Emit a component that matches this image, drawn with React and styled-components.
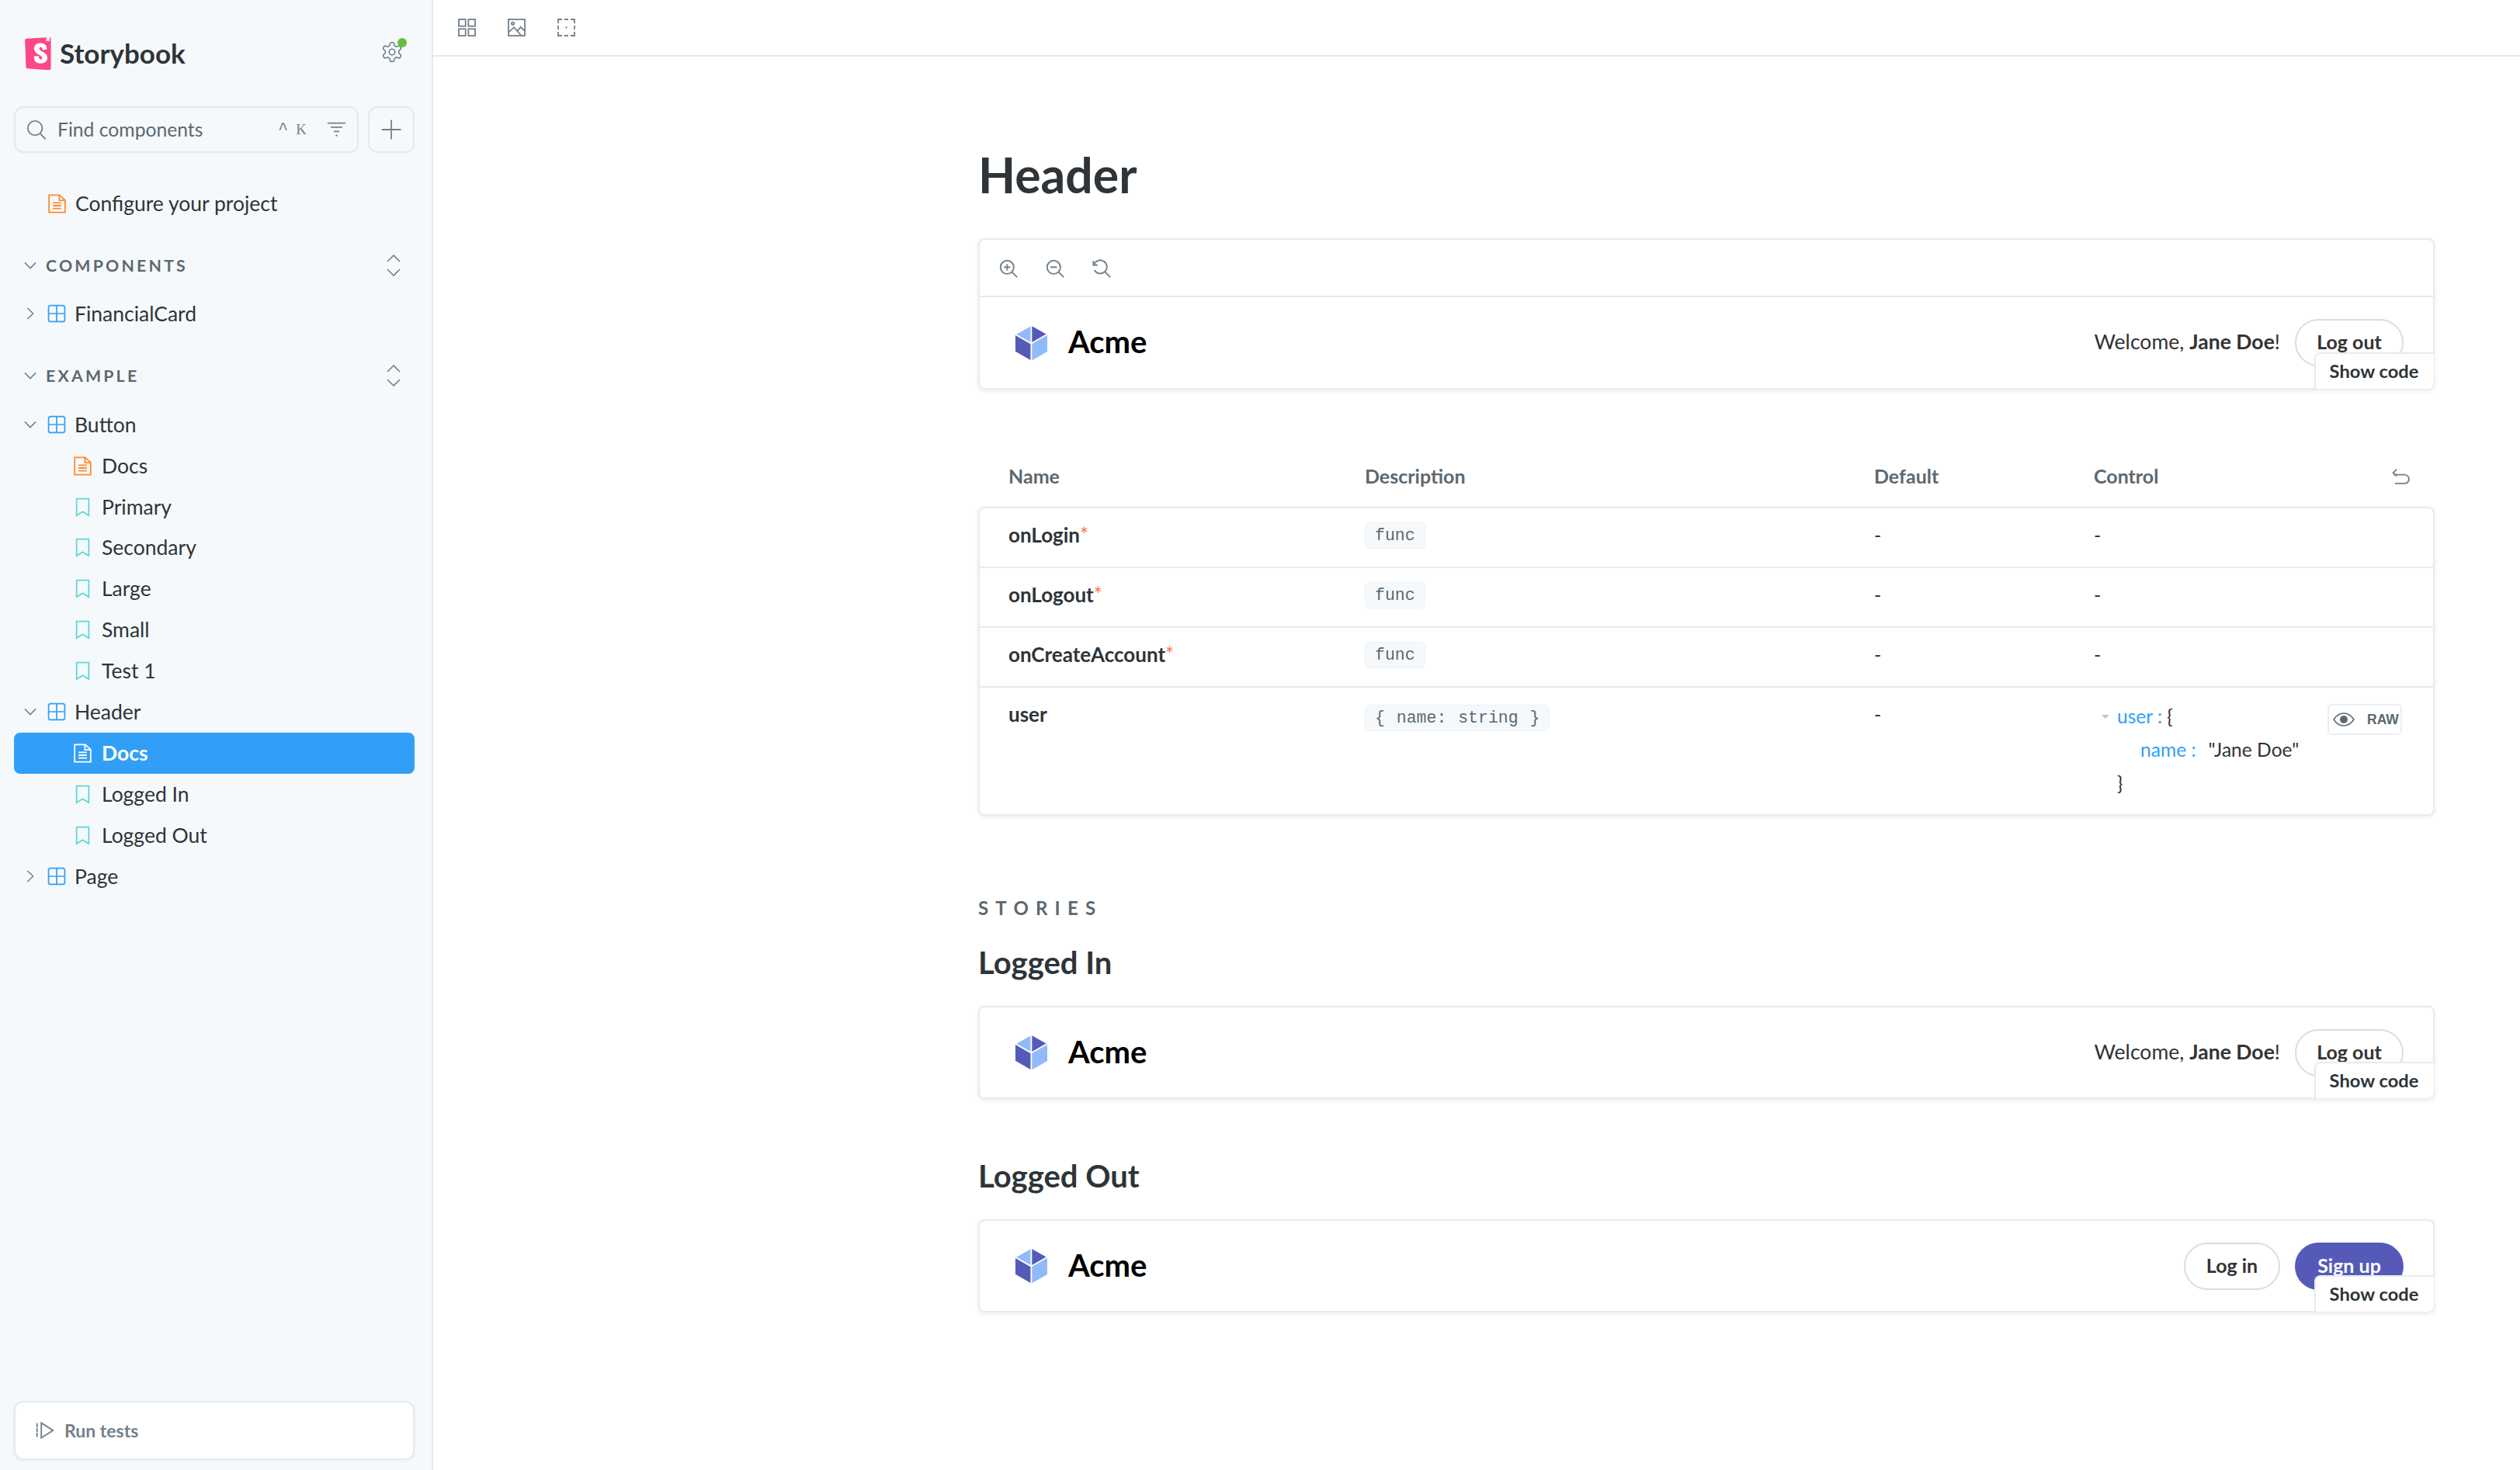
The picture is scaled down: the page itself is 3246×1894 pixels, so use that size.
import React from "react";
import styled, { createGlobalStyle, css } from "styled-components";

const Global = createGlobalStyle`
  html, body { margin: 0; padding: 0; background: #fff; }
  body { font-family: "Lato", "Noto Sans", sans-serif; color: #2e3438; }
  * { box-sizing: border-box; }
`;

const Page = styled.div`
  display: flex;
  width: 3246px;
  height: 1894px;
  overflow: hidden;
`;

/* ---------- sidebar ---------- */
const Sidebar = styled.aside`
  width: 558px;
  flex: none;
  height: 100%;
  background: #f6f9fc;
  border-right: 2px solid #e3e9f0;
  display: flex;
  flex-direction: column;
`;
const Brand = styled.div`
  height: 137px;
  flex: none;
  display: flex;
  align-items: center;
  padding: 0 36px 0 32px;
`;
const BrandName = styled.span`
  font-size: 35px;
  font-weight: 700;
  color: #2e3438;
  margin-left: 11px;
  flex: 1;
  padding-bottom: 2px;
`;
const GearWrap = styled.span`
  position: relative;
  display: flex;
  width: 30px;
  height: 30px;
  margin-top: -4px;
  color: #73818c;
`;
const GreenDot = styled.span`
  position: absolute;
  top: -3px;
  right: -4px;
  width: 12px;
  height: 12px;
  border-radius: 50%;
  background: #66bf3c;
`;
const SearchRow = styled.div`
  display: flex;
  gap: 12px;
  padding: 0 22px 0 18px;
  height: 60px;
  flex: none;
`;
const SearchBox = styled.div`
  flex: 1;
  display: flex;
  align-items: center;
  border: 2px solid #e3e9f0;
  border-radius: 12px;
  padding: 0 14px;
  color: #73818c;
`;
const SearchText = styled.span`
  margin-left: 14px;
  flex: 1;
  font-size: 24.7px;
  color: #5c6870;
  padding-bottom: 2px;
`;
const KeyCaret = styled.span`
  font: 22px "Liberation Mono", monospace;
  color: #73818c;
  margin-right: 26px;
  display: flex;
  gap: 10px;
  align-items: center;
`;
const KeyK = styled.span`
  font: 19px "Liberation Serif", serif;
`;
const Square = styled.div`
  width: 60px;
  flex: none;
  border: 2px solid #e3e9f0;
  border-radius: 12px;
  display: flex;
  align-items: center;
  justify-content: center;
  color: #73818c;
`;
const Row = styled.div`
  height: ${(p) => p.$h || 52.9}px;
  flex: none;
  margin: ${(p) => p.$mt || 0}px 22px 0 18px;
  padding-left: ${(p) => p.$pad}px;
  display: flex;
  align-items: center;
  border-radius: 8px;
  font-size: 26.5px;
  color: #2e3438;
  background: ${(p) => (p.$selected ? "#319ff7" : "transparent")};
  ${(p) =>
    p.$selected &&
    css`
      color: #fff;
      font-weight: 700;
    `}
`;
const RowLabel = styled.span`
  padding-bottom: 1px;
`;
const Caret = styled.span`
  width: 28px;
  margin-left: -1px;
  margin-right: 8px;
  flex: none;
  display: flex;
  justify-content: center;
  color: #73818c;
`;
const RowIcon = styled.span`
  display: flex;
  margin-right: ${(p) => p.$gap || 11}px;
  flex: none;
`;
const SectionHead = styled.div`
  height: 53px;
  flex: none;
  margin: ${(p) => p.$mt}px 22px 0 30px;
  display: flex;
  align-items: center;
  color: #73818c;
`;
const SectionCaret = styled.span`
  width: 24px;
  display: flex;
  margin-right: 5px;
  flex: none;
`;
const SectionName = styled.span`
  flex: 1;
  font-size: 21.3px;
  font-weight: 700;
  letter-spacing: 3.2px;
  color: #5c6870;
`;
const Expand = styled.span`
  display: flex;
  margin-right: 18px;
`;
const Footer = styled.div`
  margin: auto 22px 13px 18px;
  height: 76px;
  background: #fff;
  border: 2px solid #e6ebf1;
  border-radius: 12px;
  box-shadow: 0 1px 4px rgba(0, 0, 0, 0.06);
  display: flex;
  align-items: center;
  padding: 0 0 0 26px;
  gap: 13px;
  color: #73818c;
  font-size: 23px;
  font-weight: 700;
`;

/* ---------- main ---------- */
const Main = styled.main`
  flex: 1;
  min-width: 0;
  display: flex;
  flex-direction: column;
`;
const TopBar = styled.div`
  height: 73px;
  flex: none;
  border-bottom: 2px solid #e3e9f0;
  display: flex;
  align-items: flex-start;
  padding: 24px 0 0 32px;
  gap: 41px;
  color: #73818c;
`;
const Content = styled.div`
  padding: 113px 110px 0 702px;
`;
const Title = styled.h1`
  margin: 0;
  height: 80px;
  line-height: 78px;
  font-size: 62.5px;
  font-weight: 700;
  color: #2e3438;
`;
const Card = styled.div`
  position: relative;
  margin-top: ${(p) => p.$mt}px;
  border: 2px solid #e6ebf1;
  border-radius: 8px;
  background: #fff;
  box-shadow: 0 2px 6px rgba(0, 0, 0, 0.08);
`;
const ZoomBar = styled.div`
  height: 74px;
  border-bottom: 2px solid #e3e9f0;
  display: flex;
  align-items: center;
  padding: 1px 0 0 25px;
  gap: 36px;
  color: #73818c;
`;
const AcmeBar = styled.div`
  height: ${(p) => p.$h}px;
  display: flex;
  align-items: center;
  padding: 0 38px 0 36px;
  justify-content: space-between;
`;
const AcmeLeft = styled.div`
  display: flex;
  align-items: center;
`;
const AcmeName = styled.span`
  margin-left: 18px;
  font-size: 40px;
  font-weight: 700;
  color: #000;
  padding-bottom: 3px;
`;
const AcmeRight = styled.div`
  display: flex;
  align-items: center;
`;
const Welcome = styled.span`
  font-size: 26.6px;
  color: #333;
  margin-right: 19px;
  padding-bottom: 3px;
  b { font-weight: 700; }
`;
const Pill = styled.button`
  height: 61px;
  width: ${(p) => p.$w}px;
  margin-left: ${(p) => p.$ml || 0}px;
  border-radius: 31px;
  font-family: inherit;
  font-size: 25px;
  font-weight: 700;
  padding: 0 0 3px;
  color: ${(p) => (p.$primary ? "#fff" : "#333")};
  background: ${(p) => (p.$primary ? "#555ab9" : "transparent")};
  border: ${(p) => (p.$primary ? "none" : "2px solid #dcdcdc")};
`;
const ShowCode = styled.div`
  position: absolute;
  right: -1px;
  bottom: -1px;
  width: 154px;
  height: 47px;
  display: flex;
  align-items: center;
  justify-content: center;
  padding: 0 2px 2px 0;
  background: #fff;
  border-top: 2px solid #e6ebf1;
  border-left: 2px solid #e6ebf1;
  border-radius: 8px 0 8px 0;
  font-size: 23.7px;
  font-weight: 700;
  color: #2e3438;
`;
const cols = css`
  display: grid;
  grid-template-columns: 459px 656px 283px 1fr;
`;
const TableHead = styled.div`
  ${cols}
  position: relative;
  height: 73px;
  margin-top: 76px;
  padding: 0 0 3px 39px;
  align-items: center;
  font-size: 25px;
  font-weight: 700;
  color: #5c6870;
`;
const Undo = styled.span`
  position: absolute;
  right: 32px;
  top: 25px;
  display: flex;
  color: #73818c;
`;
const Table = styled.div`
  border: 2px solid #e6ebf1;
  border-radius: 8px;
  background: #fff;
  box-shadow: 0 2px 6px rgba(0, 0, 0, 0.08);
  margin-top: 2px;
`;
const TableRow = styled.div`
  ${cols}
  height: ${(p) => p.$h}px;
  padding: ${(p) => p.$pt}px 0 0 37px;
  border-bottom: ${(p) => (p.$last ? "none" : "2px solid #e6ebf1")};
  font-size: 25px;
  align-items: start;
`;
const PropName = styled.span`
  font-weight: 700;
  font-size: 26px;
  color: #2e3438;
  line-height: 32px;
`;
const Req = styled.span`
  color: #ff4400;
  font-weight: 400;
  opacity: 0.75;
`;
const Chip = styled.span`
  justify-self: start;
  height: 34px;
  margin-top: ${(p) => p.$mt || 0}px;
  padding: 0 12px;
  display: flex;
  align-items: center;
  background: #f6f9fc;
  border: 1px solid #eef2f6;
  border-radius: 6px;
  font: 21.5px "Liberation Mono", monospace;
  word-spacing: 2px;
  color: #5c6870;
  white-space: pre;
`;
const Dash = styled.span`
  line-height: 32px;
`;
const ControlCell = styled.div`
  position: relative;
  font-size: 24.6px;
  line-height: 43px;
  color: #2e3438;
  margin-top: -3px;
  padding-left: 30px;
`;
const Triangle = styled.span`
  position: absolute;
  left: 10px;
  top: 20px;
  width: 0;
  height: 0;
  border-left: 5px solid transparent;
  border-right: 5px solid transparent;
  border-top: 5px solid #c4c4c4;
`;
const Key = styled.span`
  color: #319ff7;
  margin-right: ${(p) => p.$mr || 6}px;
`;
const JsonLine = styled.div`
  padding-left: ${(p) => p.$pad || 0}px;
`;
const RawButton = styled.div`
  position: absolute;
  right: 40px;
  top: 6px;
  width: 96px;
  height: 40px;
  display: flex;
  align-items: center;
  gap: 16px;
  padding-left: 5px;
  border: 2px solid #eaeef3;
  border-radius: 6px;
  color: #5c6870;
  font: 700 17.5px "Liberation Sans", sans-serif;
`;
const StoriesLabel = styled.div`
  margin-top: 102px;
  height: 34px;
  line-height: 34px;
  font-size: 24px;
  font-weight: 700;
  letter-spacing: 9.2px;
  color: #5c6870;
`;
const StoryTitle = styled.h2`
  margin: ${(p) => p.$mt}px 0 0;
  height: 56px;
  line-height: 56px;
  font-size: 40px;
  font-weight: 700;
  color: #2e3438;
`;

/* ---------- icons ---------- */
const Svg = ({ size = 24, children, stroke = "currentColor", sw = 1.1, vb = 14 }) => (
  <svg width={size} height={size} viewBox={`0 0 ${vb} ${vb}`} fill="none" stroke={stroke} strokeWidth={sw}>
    {children}
  </svg>
);
const ComponentIcon = () => (
  <Svg size={24} stroke="#319ff7" sw={1}>
    <rect x="0.9" y="0.9" width="12.2" height="12.2" rx="1.6" />
    <path d="M7 1v12M1 7h12" />
  </Svg>
);
const DocIcon = ({ color = "#ff8a2b" }) => (
  <Svg size={25} stroke={color} sw={1}>
    <path d="M1.2.8h7.6l4 3.6v8.8H1.2z" />
    <path d="M4 6.4h6M4 8.4h6M4 10.4h6" />
    <path d="M8.6 1v3.6h4" />
  </Svg>
);
const BookmarkIcon = () => (
  <Svg size={25} stroke="#5fd8d4" sw={1}>
    <path d="M2.6.9h8.8v12L7 10.2 2.6 12.9z" />
  </Svg>
);
const ChevronDown = () => (
  <Svg size={18} sw={1.2}>
    <path d="M1.5 4.2 7 9.8l5.5-5.6" />
  </Svg>
);
const ChevronRight = () => (
  <Svg size={18} sw={1.2}>
    <path d="M4.2 1.5 9.8 7l-5.6 5.5" />
  </Svg>
);
const ExpandIcon = () => (
  <svg width="18" height="28" viewBox="0 0 18 28" fill="none" stroke="currentColor" strokeWidth="1.6">
    <path d="M1 9 9 1l8 8M1 19l8 8 8-8" />
  </svg>
);
const SearchIcon = () => (
  <Svg size={26} sw={1}>
    <circle cx="6" cy="6" r="5" />
    <path d="M9.6 9.8 13.2 13.6" />
  </Svg>
);
const FilterIcon = () => (
  <Svg size={25} sw={1}>
    <path d="M.5 2h13M2.8 5h8.4M5 8h4" />
    <path d="M6.3 11h1.4" />
  </Svg>
);
const PlusIcon = () => (
  <Svg size={28} sw={0.9}>
    <path d="M7 .8v12.4M.8 7h12.4" />
  </Svg>
);
const GearIcon = () => (
  <svg width="30" height="30" viewBox="0 0 24 24" fill="none" stroke="currentColor" strokeWidth="1.3" strokeLinecap="round" strokeLinejoin="round">
    <path d="M12.22 2h-.44a2 2 0 0 0-2 2v.18a2 2 0 0 1-1 1.73l-.43.25a2 2 0 0 1-2 0l-.15-.08a2 2 0 0 0-2.73.73l-.22.38a2 2 0 0 0 .73 2.73l.15.1a2 2 0 0 1 1 1.72v.51a2 2 0 0 1-1 1.74l-.15.09a2 2 0 0 0-.73 2.73l.22.38a2 2 0 0 0 2.73.73l.15-.08a2 2 0 0 1 2 0l.43.25a2 2 0 0 1 1 1.73V20a2 2 0 0 0 2 2h.44a2 2 0 0 0 2-2v-.18a2 2 0 0 1 1-1.73l.43-.25a2 2 0 0 1 2 0l.15.08a2 2 0 0 0 2.73-.73l.22-.39a2 2 0 0 0-.73-2.73l-.15-.08a2 2 0 0 1-1-1.74v-.5a2 2 0 0 1 1-1.74l.15-.09a2 2 0 0 0 .73-2.73l-.22-.38a2 2 0 0 0-2.73-.73l-.15.08a2 2 0 0 1-2 0l-.43-.25a2 2 0 0 1-1-1.73V4a2 2 0 0 0-2-2z" />
    <circle cx="12" cy="12" r="3" />
  </svg>
);
const RunIcon = () => (
  <Svg size={24} sw={1.1}>
    <path d="M1 1.6v10.8" strokeDasharray="3 .6" />
    <path d="M4.2 1.4 13 7l-8.8 5.6z" />
  </Svg>
);
const GridIcon = () => (
  <Svg size={23}>
    <rect x=".6" y=".6" width="5.3" height="5.3" />
    <rect x="8.1" y=".6" width="5.3" height="5.3" />
    <rect x=".6" y="8.1" width="5.3" height="5.3" />
    <rect x="8.1" y="8.1" width="5.3" height="5.3" />
  </Svg>
);
const PhotoIcon = () => (
  <Svg size={23}>
    <rect x=".6" y=".6" width="12.8" height="12.8" />
    <circle cx="4" cy="3.8" r="1" />
    <path d="M.8 10.6 5 6.8l5.5 6.4M7.6 9.6l2.6-3 3.2 3.2" />
  </Svg>
);
const OutlineIcon = () => (
  <Svg size={23}>
    <path d="M.6 3.6V.6h3M5.5.6h3M10.4.6h3v3M13.4 5.5v3M13.4 10.4v3h-3M8.5 13.4h-3M3.6 13.4h-3v-3M.6 8.5v-3" />
    <circle cx="7" cy="7" r=".7" fill="currentColor" stroke="none" />
  </Svg>
);
const ZoomIn = () => (
  <Svg size={24}>
    <circle cx="6" cy="6" r="5" />
    <path d="M9.6 9.6 13.5 13.5M3.6 6h4.8M6 3.6v4.8" />
  </Svg>
);
const ZoomOut = () => (
  <Svg size={24}>
    <circle cx="6" cy="6" r="5" />
    <path d="M9.6 9.6 13.5 13.5M3.6 6h4.8" />
  </Svg>
);
const ZoomReset = () => (
  <Svg size={24}>
    <path d="M1.2 4.2A5 5 0 1 1 1.6 8.2" />
    <path d="M9.6 9.6 13.5 13.5M.8 1.2v3.2h3.2" />
  </Svg>
);
const UndoIcon = () => (
  <Svg size={23} sw={1.1}>
    <path d="M3.8 1 1 3.8l2.8 2.6" />
    <path d="M1.4 3.8H10a3.2 3.2 0 0 1 0 6.8H2.4" transform="translate(0 1.5)" />
  </Svg>
);
const EyeIcon = () => (
  <svg width="28" height="20" viewBox="0 0 28 20" fill="none" stroke="currentColor" strokeWidth="1.5">
    <path d="M1 10C5 4 9 2 14 2s9 2 13 8c-4 6-8 8-13 8S5 16 1 10z" />
    <circle cx="14" cy="10" r="5" fill="currentColor" stroke="none" />
  </svg>
);
const SbLogo = () => (
  <svg width="34" height="42" viewBox="0 0 16.2 20.2" style={{ flex: "none" }}>
    <path fill="#ff4785" d="M.62 18.43 0 1.92C-.02 1.37.4.91.95.88L14.99 0c.56-.03 1.04.39 1.07.95V19.4c0 .56-.45 1-1 1h-.04L1.58 19.39c-.52-.02-.94-.44-.96-.96z" />
    <path fill="#fff" d="m13.16 2.49.1-2.31 1.93-.15.08 2.38a.15.15 0 0 1-.24.12l-.74-.59-.88.67a.15.15 0 0 1-.25-.12zM10.69 7.58c0 .38 2.57.2 2.91-.07 0-2.59-1.39-3.95-3.94-3.95S5.68 4.96 5.68 7.07c0 3.67 4.95 3.74 4.95 5.74 0 .56-.27.9-.88.9-.79 0-1.1-.4-1.06-1.77 0-.3-3-.39-3.1 0-.23 3.3 1.82 4.25 4.19 4.25 2.29 0 4.09-1.22 4.09-3.43 0-3.93-5.03-3.83-5.03-5.77 0-.79.59-.9.94-.9.37 0 1.04.07.98 1.49z" />
  </svg>
);
const AcmeLogo = () => (
  <svg width="60" height="60" viewBox="0 0 32 32" style={{ flex: "none" }}>
    <path d="M5.3 10.6l10.4 6v11.1l-10.4-6v-11zm11.4-6.2l9.7 5.5-9.7 5.6V4.4z" fill="#555AB9" />
    <path d="M27.2 10.6v11.2l-10.5 6V16.5l10.5-6zM15.7 4.4v11L6 10l9.7-5.5z" fill="#91BAF8" />
  </svg>
);

/* ---------- data ---------- */
const tree = [
  { label: "Button", open: true, kids: ["Docs", "Primary", "Secondary", "Large", "Small", "Test 1"] },
  { label: "Header", open: true, kids: ["Docs*", "Logged In", "Logged Out"] },
  { label: "Page", open: false, kids: [] },
];

const TreeRow = ({ label, open, mt }) => (
  <Row $pad={8} $mt={mt}>
    <Caret>{open ? <ChevronDown /> : <ChevronRight />}</Caret>
    <RowIcon>
      <ComponentIcon />
    </RowIcon>
    <RowLabel>{label}</RowLabel>
  </Row>
);

const Kid = ({ name }) => {
  const selected = name === "Docs*";
  const text = name.replace("*", "");
  return (
    <Row $pad={76} $selected={selected}>
      <RowIcon $gap={12}>{text === "Docs" ? <DocIcon color={selected ? "#fff" : "#ff8a2b"} /> : <BookmarkIcon />}</RowIcon>
      <RowLabel>{text}</RowLabel>
    </Row>
  );
};

const Section = ({ name, mt }) => (
  <SectionHead $mt={mt}>
    <SectionCaret>
      <ChevronDown />
    </SectionCaret>
    <SectionName>{name}</SectionName>
    <Expand>
      <ExpandIcon />
    </Expand>
  </SectionHead>
);

const AcmeHeader = ({ h, loggedIn }) => (
  <AcmeBar $h={h}>
    <AcmeLeft>
      <AcmeLogo />
      <AcmeName>Acme</AcmeName>
    </AcmeLeft>
    <AcmeRight>
      {loggedIn ? (
        <>
          <Welcome>
            Welcome, <b>Jane Doe</b>!
          </Welcome>
          <Pill $w={140}>Log out</Pill>
        </>
      ) : (
        <>
          <Pill $w={124}>Log in</Pill>
          <Pill $w={140} $ml={19} $primary>
            Sign up
          </Pill>
        </>
      )}
    </AcmeRight>
  </AcmeBar>
);

const funcs = ["onLogin", "onLogout", "onCreateAccount"];

export default function App() {
  return (
    <>
      <Global />
      <Page>
        <Sidebar>
          <Brand>
            <SbLogo />
            <BrandName>Storybook</BrandName>
            <GearWrap>
              <GearIcon />
              <GreenDot />
            </GearWrap>
          </Brand>
          <SearchRow>
            <SearchBox>
              <SearchIcon />
              <SearchText>Find components</SearchText>
              <KeyCaret>
                ^<KeyK>K</KeyK>
              </KeyCaret>
              <FilterIcon />
            </SearchBox>
            <Square>
              <PlusIcon />
            </Square>
          </SearchRow>
          <Row $pad={43} $mt={39}>
            <RowIcon>
              <DocIcon />
            </RowIcon>
            <RowLabel>Configure your project</RowLabel>
          </Row>
          <Section name="COMPONENTS" mt={27} />
          <TreeRow label="FinancialCard" mt={9} />
          <Section name="EXAMPLE" mt={27} />
          <TreeRow label={tree[0].label} open mt={10} />
          {tree[0].kids.map((k) => (
            <Kid key={k} name={k} />
          ))}
          <TreeRow label={tree[1].label} open />
          {tree[1].kids.map((k) => (
            <Kid key={k} name={k} />
          ))}
          <TreeRow label={tree[2].label} />
          <Footer>
            <RunIcon />
            Run tests
          </Footer>
        </Sidebar>
        <Main>
          <TopBar>
            <GridIcon />
            <PhotoIcon />
            <OutlineIcon />
          </TopBar>
          <Content>
            <Title>Header</Title>
            <Card $mt={41}>
              <ZoomBar>
                <ZoomIn />
                <ZoomOut />
                <ZoomReset />
              </ZoomBar>
              <AcmeHeader h={117} loggedIn />
              <ShowCode>Show code</ShowCode>
            </Card>
            <TableHead>
              <span>Name</span>
              <span>Description</span>
              <span>Default</span>
              <span>Control</span>
              <Undo>
                <UndoIcon />
              </Undo>
            </TableHead>
            <Table>
              {funcs.map((f) => (
                <TableRow key={f} $h={77} $pt={18}>
                  <PropName>
                    {f}
                    <Req>*</Req>
                  </PropName>
                  <Chip>func</Chip>
                  <Dash>-</Dash>
                  <Dash>-</Dash>
                </TableRow>
              ))}
              <TableRow $h={163} $pt={18} $last>
                <PropName>user</PropName>
                <Chip $mt={4}>{"{ name: string }"}</Chip>
                <Dash>-</Dash>
                <ControlCell>
                  <Triangle />
                  <JsonLine>
                    <Key>user :</Key>
                    {"{"}
                  </JsonLine>
                  <JsonLine $pad={30}>
                    <Key $mr={16}>name :</Key>"Jane Doe"
                  </JsonLine>
                  <JsonLine>{"}"}</JsonLine>
                  <RawButton>
                    <EyeIcon />
                    RAW
                  </RawButton>
                </ControlCell>
              </TableRow>
            </Table>
            <StoriesLabel>STORIES</StoriesLabel>
            <StoryTitle $mt={25}>Logged In</StoryTitle>
            <Card $mt={28}>
              <AcmeHeader h={116} loggedIn />
              <ShowCode>Show code</ShowCode>
            </Card>
            <StoryTitle $mt={71}>Logged Out</StoryTitle>
            <Card $mt={28}>
              <AcmeHeader h={116} />
              <ShowCode>Show code</ShowCode>
            </Card>
          </Content>
        </Main>
      </Page>
    </>
  );
}
